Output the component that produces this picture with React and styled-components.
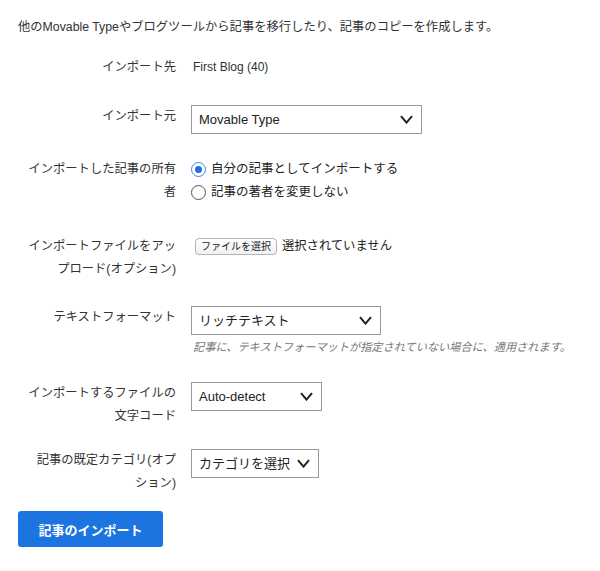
import React from "react";
import styled, { createGlobalStyle } from "styled-components";

const Global = createGlobalStyle`
  html, body { margin: 0; padding: 0; background: #fff; }
  body {
    font-family: "Liberation Sans", "Noto Sans CJK JP", sans-serif;
    color: #333;
    -webkit-font-smoothing: antialiased;
  }
`;

const Page = styled.div`
  width: 600px;
  height: 571px;
  box-sizing: border-box;
  padding: 18px 18px 0 18px;
  font-size: 12px;
`;

const Intro = styled.p`
  margin: 0;
  font-size: 12.3px;
  line-height: 18px;
  color: #333;
`;

const Row = styled.div`
  display: grid;
  grid-template-columns: 149px 1fr;
  column-gap: 15px;
  align-items: start;
  margin-top: ${(p) => p.$mt}px;
  margin-left: 9px;
`;

const Label = styled.div`
  text-align: right;
  font-size: 12.3px;
  line-height: 23px;
  color: #333;
`;

const Value = styled.div`
  display: flex;
  flex-direction: column;
  align-items: flex-start;
  font-size: 12px;
  line-height: 23px;
`;

const PlainValue = styled.span`
  padding-left: 2px;
  font-size: 12px;
  color: #333;
`;

const SelectBox = styled.div`
  box-sizing: border-box;
  width: ${(p) => p.$w}px;
  height: 29px;
  border: 1px solid #9a9a9a;
  background: #fff;
  display: flex;
  align-items: center;
  justify-content: space-between;
  padding: 0 8px 0 7px;
  font-size: 13px;
  color: #222;
`;

const Chevron = () => (
  <svg width="13" height="9" viewBox="0 0 13 9">
    <polyline points="1,1.2 6.5,7.6 12,1.2" fill="none" stroke="#222" strokeWidth="2" />
  </svg>
);

const Select = ({ w, children }) => (
  <SelectBox $w={w}>
    <span>{children}</span>
    <Chevron />
  </SelectBox>
);

const RadioLine = styled.label`
  display: flex;
  align-items: center;
  gap: 5px;
  height: 23px;
  font-size: 12.5px;
  color: #222;
`;

const RadioCircle = styled.span`
  box-sizing: border-box;
  width: 15px;
  height: 15px;
  border-radius: 50%;
  border: ${(p) => (p.$checked ? "1.5px solid #3d84f0" : "1.5px solid #555")};
  background: #fff;
  display: flex;
  align-items: center;
  justify-content: center;
  &::after {
    content: "";
    width: 7px;
    height: 7px;
    border-radius: 50%;
    background: ${(p) => (p.$checked ? "#1f6fe5" : "transparent")};
  }
`;

const FileLine = styled.div`
  display: flex;
  align-items: center;
  gap: 5px;
  height: 23px;
  padding-left: 4px;
`;

const FileButton = styled.span`
  box-sizing: border-box;
  height: 17px;
  padding: 0 5px;
  border: 1px solid #b4b4b4;
  border-radius: 4px;
  background: linear-gradient(#fff, #f1f1f1);
  font-size: 10px;
  line-height: 15px;
  color: #222;
`;

const FileStatus = styled.span`
  font-size: 12.3px;
  color: #222;
`;

const Help = styled.div`
  margin-top: 4px;
  padding-left: 2px;
  font-size: 11.2px;
  line-height: 16px;
  font-style: italic;
  color: #777;
`;

const SubmitButton = styled.button`
  margin-top: ${(p) => p.$mt}px;
  width: 145px;
  height: 36px;
  border: none;
  border-radius: 3px;
  background: #1b74e0;
  color: #fff;
  font-family: "Liberation Sans", "Noto Sans CJK JP", sans-serif;
  font-size: 13px;
  font-weight: bold;
  display: block;
`;

export default function App() {
  return (
    <Page>
      <Global />
      <Intro>他のMovable Typeやブログツールから記事を移行したり、記事のコピーを作成します。</Intro>

      <Row $mt={20}>
        <Label>インポート先</Label>
        <Value>
          <PlainValue>First Blog (40)</PlainValue>
        </Value>
      </Row>

      <Row $mt={26}>
        <Label>インポート元</Label>
        <Value>
          <Select w={231}>Movable Type</Select>
        </Value>
      </Row>

      <Row $mt={24}>
        <Label>インポートした記事の所有者</Label>
        <Value>
          <RadioLine>
            <RadioCircle $checked />
            自分の記事としてインポートする
          </RadioLine>
          <RadioLine>
            <RadioCircle />
            記事の著者を変更しない
          </RadioLine>
        </Value>
      </Row>

      <Row $mt={31}>
        <Label>インポートファイルをアップロード(オプション)</Label>
        <Value>
          <FileLine>
            <FileButton>ファイルを選択</FileButton>
            <FileStatus>選択されていません</FileStatus>
          </FileLine>
        </Value>
      </Row>

      <Row $mt={25}>
        <Label>テキストフォーマット</Label>
        <Value>
          <Select w={190}>リッチテキスト</Select>
          <Help>記事に、テキストフォーマットが指定されていない場合に、適用されます。</Help>
        </Value>
      </Row>

      <Row $mt={27}>
        <Label>インポートするファイルの文字コード</Label>
        <Value>
          <Select w={131}>Auto-detect</Select>
        </Value>
      </Row>

      <Row $mt={21}>
        <Label>記事の既定カテゴリ(オプション)</Label>
        <Value>
          <Select w={128}>カテゴリを選択</Select>
        </Value>
      </Row>

      <SubmitButton $mt={16}>記事のインポート</SubmitButton>
    </Page>
  );
}
